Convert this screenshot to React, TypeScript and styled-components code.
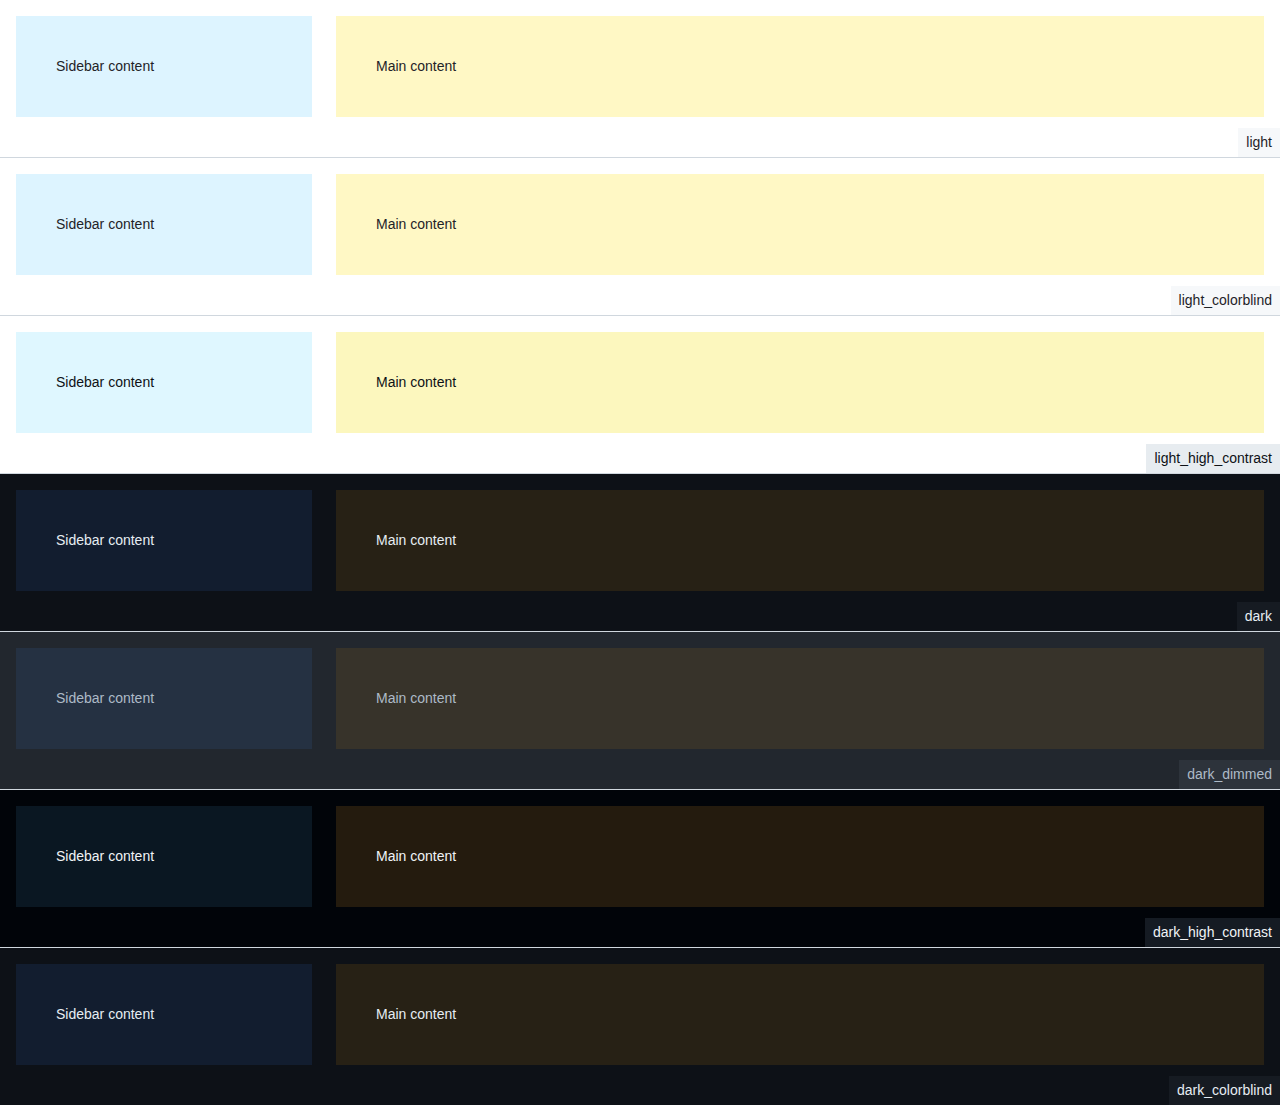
import React from "react";
import styled, { createGlobalStyle } from "styled-components";

const Global = createGlobalStyle`
  html, body { margin: 0; padding: 0; background: #ffffff; }
  body { font-family: "Liberation Sans", Arial, sans-serif; font-size: 14px; line-height: 1.5; }
`;

type Theme = {
  name: string;
  bg: string;
  fg: string;
  sidebar: string;
  main: string;
  labelBg: string;
  labelFg: string;
};

const themes: Theme[] = [
  { name: "light", bg: "#ffffff", fg: "#1f2328", sidebar: "#ddf4ff", main: "#fff8c5", labelBg: "#f6f8fa", labelFg: "#1f2328" },
  { name: "light_colorblind", bg: "#ffffff", fg: "#1f2328", sidebar: "#ddf4ff", main: "#fff8c5", labelBg: "#f6f8fa", labelFg: "#1f2328" },
  { name: "light_high_contrast", bg: "#ffffff", fg: "#0e1116", sidebar: "#dff7ff", main: "#fcf7be", labelBg: "#e7ecf0", labelFg: "#0e1116" },
  { name: "dark", bg: "#0d1117", fg: "#e6edf3", sidebar: "#121d2f", main: "#272115", labelBg: "#161b22", labelFg: "#e6edf3" },
  { name: "dark_dimmed", bg: "#22272e", fg: "#adbac7", sidebar: "#253142", main: "#37332a", labelBg: "#2d333b", labelFg: "#adbac7" },
  { name: "dark_high_contrast", bg: "#010409", fg: "#f0f3f6", sidebar: "#0a1722", main: "#241b0e", labelBg: "#151b23", labelFg: "#f0f3f6" },
  { name: "dark_colorblind", bg: "#0d1117", fg: "#e6edf3", sidebar: "#121d2f", main: "#272115", labelBg: "#161b22", labelFg: "#e6edf3" },
];

const Section = styled.section<{ $t: Theme }>`
  position: relative;
  display: flex;
  gap: 24px;
  padding: 16px 16px 40px;
  background: ${(p) => p.$t.bg};
  color: ${(p) => p.$t.fg};
  border-bottom: 1px solid #d0d7de;
`;

const Sidebar = styled.div<{ $t: Theme }>`
  width: 296px;
  flex: none;
  box-sizing: border-box;
  padding: 40px;
  background: ${(p) => p.$t.sidebar};
`;

const Main = styled.div<{ $t: Theme }>`
  flex: 1;
  box-sizing: border-box;
  padding: 40px;
  background: ${(p) => p.$t.main};
`;

const Label = styled.span<{ $t: Theme }>`
  position: absolute;
  right: 0;
  bottom: 0;
  padding: 4px 8px;
  background: ${(p) => p.$t.labelBg};
  color: ${(p) => p.$t.labelFg};
`;

export default function App() {
  return (
    <>
      <Global />
      {themes.map((t) => (
        <Section key={t.name} $t={t}>
          <Sidebar $t={t}>Sidebar content</Sidebar>
          <Main $t={t}>Main content</Main>
          <Label $t={t}>{t.name}</Label>
        </Section>
      ))}
    </>
  );
}
